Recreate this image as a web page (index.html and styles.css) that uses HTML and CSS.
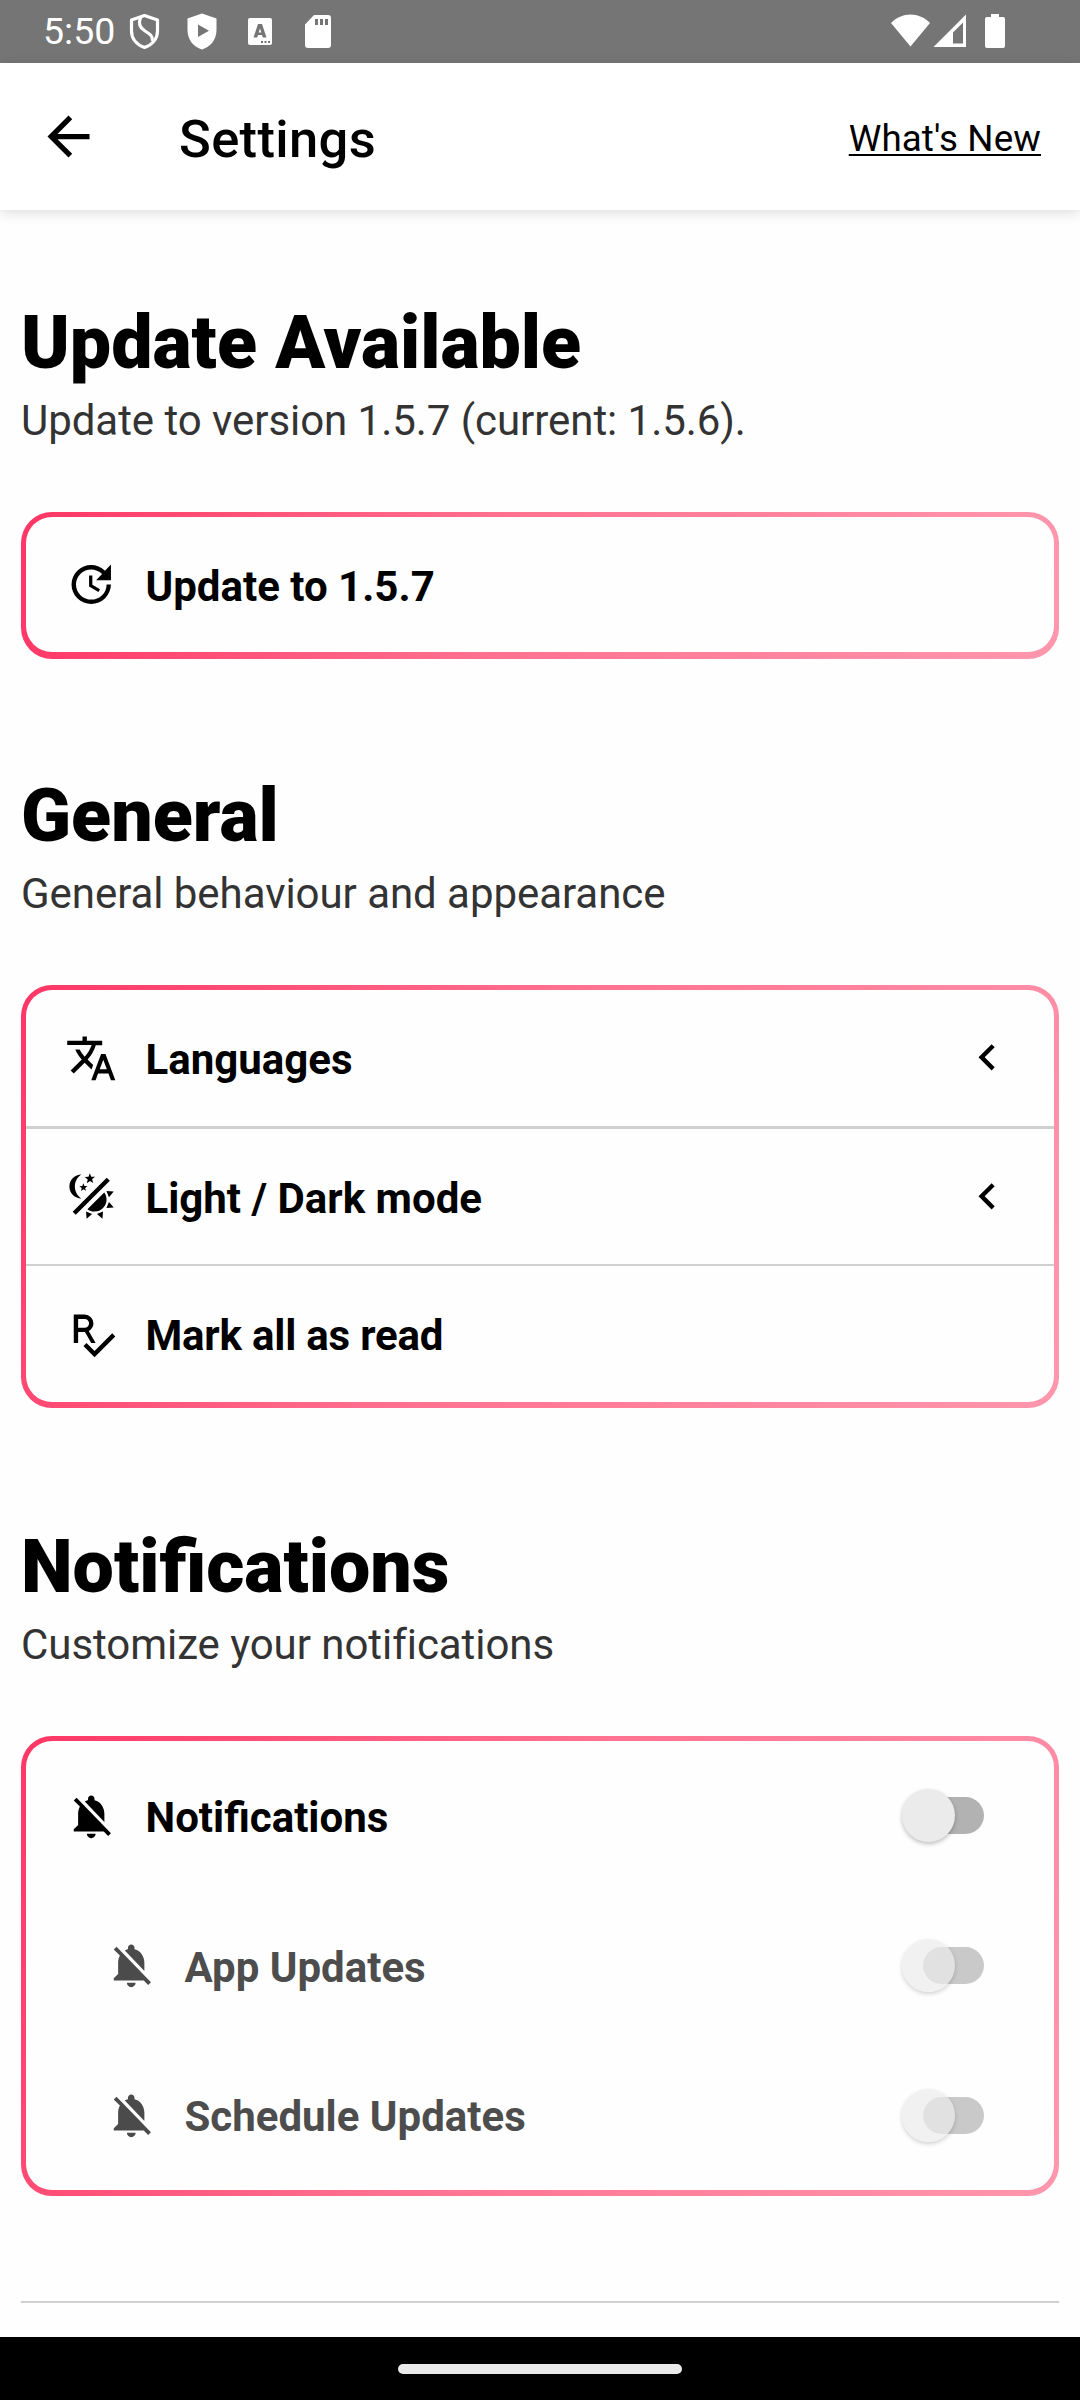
FILE: index.html
```html
<!DOCTYPE html>
<html lang="en">
<head>
<meta charset="utf-8">
<title>Settings</title>
<link rel="stylesheet" href="styles.css">
</head>
<body>
<svg class="sprite" aria-hidden="true">
  <symbol id="bell-off" viewBox="0 0 24 24"><path d="M20 18.69L7.84 6.14 5.27 3.49 4 4.76l2.8 2.8v.01c-.52.99-.8 2.16-.8 3.42v5l-2 2v1h13.73l2 2L21 19.72l-1-1.03zM12 22c1.11 0 2-.89 2-2h-4c0 1.11.89 2 2 2zm6-7.32V11c0-3.08-1.64-5.64-4.5-6.32V4c0-.83-.67-1.5-1.5-1.5s-1.5.67-1.5 1.5v.68c-.15.03-.29.08-.42.12-.1.03-.2.07-.3.11h-.01c-.01 0-.01 0-.02.01-.23.09-.46.2-.68.31 0 0-.01 0-.01.01L18 14.68z"/></symbol>
  <symbol id="chevron" viewBox="0 0 24 24"><path d="M15.41,16.58L10.83,12L15.41,7.41L14,6L8,12L14,18L15.41,16.58Z"/></symbol>
</svg>
<div class="statusbar">
  <span class="clock">5:50</span>
  <svg class="status-left" viewBox="128 0 208 63" width="208" height="63">
    <path d="M144.500 15.500L157.500 20V31C157.500 39 152 45 144.500 47.500C137 45 131.500 39 131.500 31V20Z" fill="none" stroke="#fff" stroke-width="3.200" stroke-linejoin="round"/>
    <path d="M140.500 17.500C138 24 140 28 145 31C150 34 153 36 152.500 41" fill="none" stroke="#fff" stroke-width="3.200"/>
    <path fill-rule="evenodd" d="M202 13.500L216.500 18.500V30C216.500 39.500 210.500 47 202 49.500C193.500 47 187.500 39.500 187.500 30V18.500ZM198 24.500V37L209 30.700Z"/>
    <path fill-rule="evenodd" d="M250 18H270a2 2 0 0 1 2 2V43a2 2 0 0 1-2 2H250a2 2 0 0 1-2-2V20a2 2 0 0 1 2-2ZM258 24L253.500 37.500H257.200L258 35H262L262.800 37.500H266.500L262 24ZM260 28.500L261.300 32.500H258.700ZM261 41V43H263V41ZM264.500 41V43H266.500V41ZM268 41V43H270V41Z"/>
    <path fill-rule="evenodd" d="M314 15H328a3 3 0 0 1 3 3V45a3 3 0 0 1-3 3H308a3 3 0 0 1-3-3V24.500ZM315 19V25H318V19ZM320 19V25H323V19ZM325 19V25H328V19Z"/>
  </svg>
  <svg class="status-right" viewBox="888 0 120 63" width="120" height="63">
    <path d="M891 23C902 11.500 919 11.500 930 23L910.500 46.500Z"/>
    <path fill-rule="evenodd" d="M966 14.500V47H933.500ZM963 22.500L953 32.500V43.500H963Z"/>
    <path d="M991 14H999V17H1003a2 2 0 0 1 2 2V46a2 2 0 0 1-2 2H987a2 2 0 0 1-2-2V19a2 2 0 0 1 2-2H991Z"/>
  </svg>
</div>
<header class="appbar">
  <svg class="back" viewBox="0 0 24 24"><path d="M20 11H7.830l5.590-5.590L12 4l-8 8 8 8 1.410-1.410L7.830 13H20v-2z"/></svg>
  <h1 class="appbar-title">Settings</h1>
  <a class="whats-new">What's New</a>
</header>
<main class="content">
  <section class="section">
    <h2 class="heading">Update Available</h2>
    <p class="caption">Update to version 1.5.7 (current: 1.5.6).</p>
    <div class="card card-update">
      <div class="rows">
        <div class="row">
          <svg class="icon" viewBox="0 0 24 24"><path d="M21,10.120H14.220L16.960,7.300C14.230,4.600 9.810,4.500 7.080,7.200C4.350,9.910 4.350,14.280 7.080,17C9.810,19.700 14.230,19.700 16.960,17C18.320,15.650 19,14.080 19,12.100H21C21,14.080 20.120,16.650 18.360,18.390C14.850,21.870 9.150,21.870 5.640,18.390C2.140,14.920 2.110,9.280 5.620,5.810C9.130,2.340 14.760,2.340 18.270,5.810L21,3V10.120M12.500,8V12.250L16,14.330L15.280,15.540L11,13V8H12.500Z"/></svg>
          <span class="label">Update to 1.5.7</span>
        </div>
      </div>
    </div>
  </section>
  <section class="section section-general">
    <h2 class="heading">General</h2>
    <p class="caption">General behaviour and appearance</p>
    <div class="card card-general">
      <div class="rows">
        <div class="row">
          <svg class="icon" viewBox="0 0 24 24"><path d="M12.870 15.070l-2.540-2.510.03-.03A17.520 17.520 0 0014.070 6H17V4h-7V2H8v2H1v1.990h11.170C11.500 7.920 10.440 9.750 9 11.350 8.070 10.320 7.300 9.190 6.690 8h-2c.73 1.630 1.730 3.170 2.980 4.560l-5.090 5.020L4 19l5-5 3.110 3.110.76-2.040zM18.500 10h-2L12 22h2l1.120-3h4.750L21 22h2l-4.500-12zm-2.620 7l1.620-4.330L19.120 17h-3.240z"/></svg>
          <span class="label">Languages</span>
          <svg class="icon chevron"><use href="#chevron"/></svg>
        </div>
        <div class="row divided-thick">
          <svg class="icon" viewBox="0 0 24 24"><path d="M7.500,2C5.710,3.150 4.500,5.180 4.500,7.500C4.500,9.820 5.710,11.850 7.530,13C4.460,13 2,10.540 2,7.500A5.500,5.500 0 0,1 7.500,2M19.070,3.500L20.500,4.930L4.930,20.500L3.500,19.070L19.070,3.500M12.890,5.930L11.410,5L9.970,6L10.390,4.300L9,3.240L10.750,3.120L11.330,1.470L12,3.100L13.730,3.130L12.380,4.260L12.890,5.930M9.590,9.540L8.430,8.810L7.310,9.590L7.650,8.270L6.560,7.440L7.920,7.350L8.370,6.060L8.880,7.330L10.240,7.360L9.190,8.230L9.590,9.540M19,13.500A5.500,5.500 0 0,1 13.500,19C12.280,19 11.150,18.600 10.240,17.930L17.930,10.240C18.600,11.150 19,12.280 19,13.500M14.600,20.080L17.370,18.930L17.130,22.280L14.600,20.080M18.930,17.380L20.080,14.610L22.280,17.150L18.930,17.380M20.080,12.420L18.940,9.640L22.280,9.880L20.080,12.420M9.630,18.930L12.400,20.080L9.870,22.270L9.630,18.930Z"/></svg>
          <span class="label">Light / Dark mode</span>
          <svg class="icon chevron"><use href="#chevron"/></svg>
        </div>
        <div class="row divided">
          <svg class="icon" viewBox="0 0 24 24"><path d="M21.590,11.590L23,13L13.500,22.500L8.420,17.410L9.830,16L13.500,19.680L21.590,11.590M4,16V3H6L9,3A4,4 0 0,1 13,7C13,8.540 12.130,9.880 10.850,10.550L14,16H12L9.110,11H6V16H4M6,9H9A2,2 0 0,0 11,7A2,2 0 0,0 9,5H6V9Z"/></svg>
          <span class="label label-read">Mark all as read</span>
        </div>
      </div>
    </div>
  </section>
  <section class="section section-notifications">
    <h2 class="heading">Notifications</h2>
    <p class="caption">Customize your notifications</p>
    <div class="card card-notifications">
      <div class="rows">
        <div class="row">
          <svg class="icon"><use href="#bell-off"/></svg>
          <span class="label">Notifications</span>
          <span class="switch"><span class="thumb"></span></span>
        </div>
        <div class="row disabled">
          <svg class="icon"><use href="#bell-off"/></svg>
          <span class="label">App Updates</span>
          <span class="switch"><span class="thumb"></span></span>
        </div>
        <div class="row disabled">
          <svg class="icon"><use href="#bell-off"/></svg>
          <span class="label">Schedule Updates</span>
          <span class="switch"><span class="thumb"></span></span>
        </div>
      </div>
    </div>
  </section>
  <hr class="rule">
</main>
<nav class="navbar"><span class="pill"></span></nav>
</body>
</html>
```
FILE: styles.css
```css
* { box-sizing: border-box; margin: 0; }

body {
  width: 1080px;
  height: 2400px;
  display: flex;
  flex-direction: column;
  overflow: hidden;
  background: #fefefe;
  color: #000;
  font-family: Roboto, "Noto Sans", sans-serif;
}

.sprite { display: none; }
svg { display: block; flex: none; }

.statusbar {
  flex: none;
  height: 63px;
  display: flex;
  align-items: center;
  padding: 0 72px 0 43px;
  background: #757575;
  color: #fff;
  fill: #fff;
}
.clock { width: 85px; font-size: 37.5px; line-height: 63px; }
.status-right { margin-left: auto; }

.appbar {
  flex: none;
  position: relative;
  height: 147px;
  display: flex;
  align-items: center;
  padding: 0 39px 0 37px;
  background: #fff;
  box-shadow: 0 3px 12px rgba(0, 0, 0, .13);
}
.back { width: 63px; height: 63px; }
.appbar-title { margin-left: 79px; padding-top: 4px; font-size: 52.5px; font-weight: 500; letter-spacing: .35px; }
.whats-new {
  margin-left: auto;
  padding-top: 3px;
  font-size: 36.75px;
  letter-spacing: .1px;
  text-decoration: underline;
  text-decoration-thickness: 2px;
  text-underline-offset: 3px;
}

.content { flex: 1; padding: 90px 21px 0; }
.section { height: 473px; }
.section-general { height: 751px; }
.section-notifications { height: 777px; }
.heading { font-size: 73.5px; line-height: 86px; font-weight: 900; }
.caption { margin-top: 10px; font-size: 42px; line-height: 50px; letter-spacing: -.05px; color: #333; }

.card {
  margin-top: 66px;
  padding: 5px;
  border-radius: 31px;
}
.card-update { height: 147px; padding-bottom: 7px; background: linear-gradient(98.1deg, #ff3665, #ff7190 46%, #ff97ad); }
.card-general { height: 423px; padding-bottom: 6px; background: linear-gradient(112.2deg, #ff3665, #ff7190 46%, #ff97ad); }
.card-notifications { height: 460px; padding-bottom: 6px; background: linear-gradient(113.9deg, #ff3665, #ff7190 46%, #ff97ad); }

.rows {
  height: 100%;
  display: flex;
  flex-direction: column;
  border-radius: 26px;
  background: #fefefe;
}
.row { flex: 1 1 0; display: flex; align-items: center; padding: 0 45px 0 39px; }
.divided-thick { border-top: 3px solid #d0d0d0; }
.divided { border-top: 2px solid #d0d0d0; }
.icon { width: 52.5px; height: 52.5px; }
.label { margin-left: 28px; padding-top: 4px; font-size: 42px; line-height: 50px; font-weight: 700; }
.label-read { letter-spacing: -.2px; }
.chevron { margin-left: auto; margin-right: -4px; margin-bottom: 1px; }

.switch {
  width: 61px;
  height: 37px;
  margin: 0 25px 0 auto;
  display: flex;
  align-items: center;
  border-radius: 19px;
  background: #b2b2b2;
}
.thumb {
  flex: none;
  width: 53px;
  height: 53px;
  margin-left: -21px;
  border-radius: 50%;
  background: #ebebeb;
  box-shadow: 0 2px 4px rgba(0, 0, 0, .25);
}
.disabled { padding-left: 79px; }
.disabled .icon { opacity: .7; }
.disabled .label { color: #4d4d4d; margin-left: 27px; }
.disabled .switch { background: #c9c9c9; }
.disabled .thumb { background: rgba(235, 235, 235, .7); box-shadow: 0 2px 4px rgba(0, 0, 0, .18); }

.rule { border: 0; height: 2px; background: #d0d0d0; }

.navbar {
  flex: none;
  height: 63px;
  display: flex;
  align-items: center;
  justify-content: center;
  background: #000;
}
.pill { width: 284px; height: 10px; border-radius: 5px; background: #eaeaea; }
```
